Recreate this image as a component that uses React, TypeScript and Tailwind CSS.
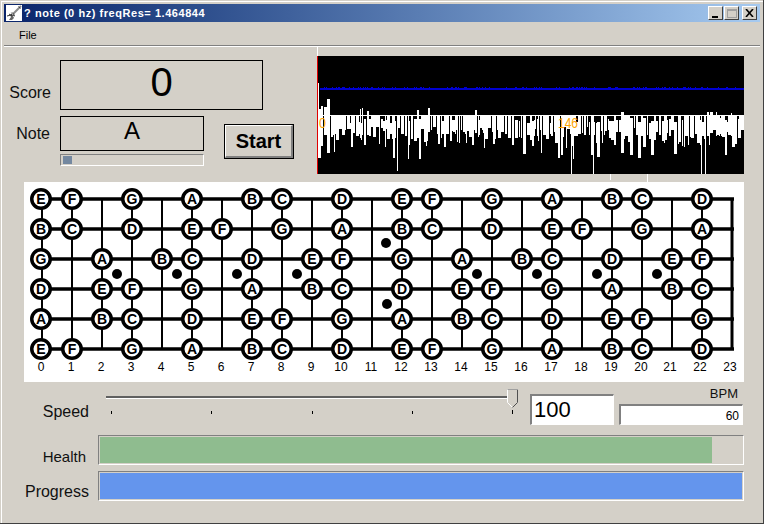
import React from "react";

const sans = { fontFamily: '"Liberation Sans", Arial, sans-serif' };

const ROWS: [number, string[]][] = [
  [199, "E0 F1 G3 A5 B7 C8 D10 E12 F13 G15 A17 B19 C20 D22".split(" ")],
  [229, "B0 C1 D3 E5 F6 G8 A10 B12 C13 D15 E17 F18 G20 A22".split(" ")],
  [259, "G0 A2 B4 C5 D7 E9 F10 G12 A14 B16 C17 D19 E21 F22".split(" ")],
  [289, "D0 E2 F3 G5 A7 B9 C10 D12 E14 F15 G17 A19 B21 C22".split(" ")],
  [319, "A0 B2 C3 D5 E7 F8 G10 A12 B14 C15 D17 E19 F20 G22".split(" ")],
  [349, "E0 F1 G3 A5 B7 C8 D10 E12 F13 G15 A17 B19 C20 D22".split(" ")],
];
const DOTS: [number, number][] = [
  [117, 274], [177, 274], [237, 274], [297, 274], [386, 243], [387, 304],
  [477, 274], [537, 274], [597, 274], [657, 274],
];

function Fretboard() {
  const ox = 24;
  const oy = 182;
  const frets = Array.from({ length: 24 }, (_, i) => i);
  return (
    <svg width="720" height="200" viewBox={`${ox} ${oy} 720 200`} className="block bg-white" style={sans}>
      {ROWS.map(([y]) => (
        <line key={y} x1={42} x2={734} y1={y} y2={y} stroke="#000" strokeWidth={3.5} />
      ))}
      {frets.map((i) => (
        <line key={i} x1={42 + i * 30} x2={42 + i * 30} y1={199} y2={349} stroke="#000" strokeWidth={i === 23 ? 3 : 2} />
      ))}
      {DOTS.map(([x, y]) => (
        <circle key={`${x}-${y}`} cx={x} cy={y} r={5} fill="#000" />
      ))}
      {ROWS.map(([y, notes]) =>
        notes.map((n) => {
          const fret = parseInt(n.slice(1), 10);
          const x = 42 + fret * 30 - (fret === 0 ? 1 : 0);
          return (
            <g key={`${y}-${n}`}>
              <circle cx={x} cy={y} r={9.25} fill="#fff" stroke="#000" strokeWidth={3.5} />
              <text x={x} y={y + 5} textAnchor="middle" fontSize={14} fontWeight={700} fill="#000">
                {n[0]}
              </text>
            </g>
          );
        })
      )}
      {frets.map((i) => (
        <text key={i} x={41 + i * 30 - (i > 20 ? 1 : 0)} y={371} textAnchor="middle" fontSize={12} fill="#000">
          {i}
        </text>
      ))}
    </svg>
  );
}

function Spectrum() {
  let seed = 4242;
  const rnd = () => {
    seed = (seed * 1103515245 + 12345) & 0x7fffffff;
    return (seed >> 8) / 0x7fffff;
  };
  const bars: React.ReactNode[] = [];
  const blue: React.ReactNode[] = [];
  let x = 1;
  while (x < 427) {
    const r = rnd();
    const w = r < 0.4 ? 1 : r < 0.75 ? 2 : 3;
    const q = rnd();
    // y values relative to the svg: the white rule sits at 68 (page y 115)
    let bottom = 80 + rnd() * 12;
    if (q > 0.55) bottom = 88 + rnd() * 12;
    if (q > 0.86) bottom = 98 + rnd() * 14;
    if (q > 0.97) bottom = 110 + rnd() * 10;
    let top = rnd() < 0.3 ? 71 + rnd() * 5 : 69;
    if (x < 14) top = 49 + rnd() * 18;
    else if (rnd() < 0.03) top = 61 + rnd() * 6;
    bars.push(<rect key={x} x={x} y={Math.round(top)} width={w} height={Math.round(bottom - top)} fill="#fff" />);
    x += w;
    if (rnd() < 0.3) x += 1;
  }
  for (let bx = 3; bx < 427; bx++) {
    if (rnd() < 0.2) blue.push(<rect key={bx} x={bx} y={40} width={1} height={1} fill="#0000d0" />);
  }
  const spikes = [80, 254, 276, 384, 388];
  return (
    <svg width="427" height="135" viewBox="0 0 427 135" className="block" style={sans}>
      <line x1="0.5" x2="0.5" y1="0" y2="9" stroke="#fff" />
      <rect x="1" y="9" width="426" height="118" fill="#000" />
      <rect x="3" y="41" width="424" height="2" fill="#0000d0" />
      {blue}
      {bars}
      <rect x="1" y="68" width="427" height="1" fill="#fff" />
      {spikes.map((sx) => (
        <rect key={sx} x={sx} y={69} width={1} height={sx === 80 ? 55 : 58} fill="#fff" />
      ))}
      <rect x="1" y="36" width="1" height="38" fill="#fff" />
      <rect x="0" y="9" width="1" height="118" fill="#e00000" />
      <text x="2" y="81" fontSize={14} fill="#ffa500" textLength={7} lengthAdjust="spacingAndGlyphs">0</text>
      <text x="241" y="81" fontSize={14} fill="#ffa500" textLength={20} lengthAdjust="spacingAndGlyphs">146</text>
      <rect x="293" y="127" width="1" height="6" fill="#fff" />
      <rect x="330" y="127" width="1" height="8" fill="#fff" />
    </svg>
  );
}

function WinButton({ children }: { children: React.ReactNode }) {
  return (
    <div className="flex h-[14px] w-[15px] items-center justify-center border-t border-l border-t-white border-l-white border-r border-b border-r-[#404040] border-b-[#404040] bg-[#d4d0c8]">
      {children}
    </div>
  );
}

function Sunken({ className, children }: { className: string; children?: React.ReactNode }) {
  return (
    <div className={`border-t border-l border-t-[#808080] border-l-[#808080] border-r border-b border-r-white border-b-white ${className}`}>
      {children}
    </div>
  );
}

function Ticks() {
  return (
    <svg width="412" height="6" viewBox="0 0 412 6" className="block">
      {[0, 100, 201, 301, 401].map((x) => (
        <rect key={x} x={x} y={x === 401 ? 0 : 1} width={1} height={x === 401 ? 4 : 3} fill="#000" />
      ))}
    </svg>
  );
}

export default function App() {
  return (
    <div className="relative h-[524px] w-[764px] overflow-hidden bg-[#d4d0c8] text-black" style={sans}>
      <div className="flex h-[524px] w-[764px] flex-col border-r border-b border-r-[#404040] border-b-[#404040]">
        <div className="flex h-[523px] w-[763px] flex-col pt-[1px] pl-[1px]">
          <div className="flex h-[522px] flex-col border-t border-l border-t-white border-l-white pt-[2px] pl-[2px] pr-[2px]">
            {/* Title bar */}
            <div className="flex h-[18px] w-[756px] items-center bg-gradient-to-r from-[#0a246a] to-[#a6caf0]">
              <svg width="16" height="16" viewBox="0 0 16 16" className="ml-[2px] shrink-0">
                <rect width="16" height="16" fill="#fff" />
                <path d="M15 1 L8 8" stroke="#8a8a8a" strokeWidth="2" />
                <path d="M12.5 1.5 L14.5 3.5" stroke="#444" strokeWidth="1" />
                <path d="M4 10 L7 7 L9 9 L7 11 L8 13 L6 15 L3 15 L5 12 Z" fill="#666" />
                <path d="M3 9 L6 11 M1 11 L5 10 M5 9 L9 11" stroke="#333" strokeWidth="1" />
                <path d="M5 7 L7 10" stroke="#bbb" strokeWidth="1" />
              </svg>
              <span className="ml-[2px] whitespace-nowrap text-[11px] font-bold tracking-[0.55px] text-white">
                ? note (0 hz) freqRes= 1.464844
              </span>
              <div className="ml-auto mr-[3px] flex items-center">
                <WinButton>
                  <div className="mt-[7px] mr-[1px] h-[2px] w-[6px] bg-black" />
                </WinButton>
                <div className="w-[1px]" />
                <WinButton>
                  <div className="h-[9px] w-[10px] border border-t-2 border-[#a0a0a0]" />
                </WinButton>
                <div className="w-[3px]" />
                <WinButton>
                  <svg width="9" height="8" viewBox="0 0 9 8">
                    <path d="M1 0 L8 8 M8 0 L1 8" stroke="#000" strokeWidth="1.6" />
                  </svg>
                </WinButton>
              </div>
            </div>
            {/* Menu */}
            <div className="flex h-[23px] w-[756px] items-center pl-[15px] pt-[3px] text-[11px]">File</div>
            <div className="h-[2px] w-[756px] border-t border-b border-t-[#808080] border-b-white" />
            {/* Top */}
            <div className="flex h-[135px]">
              <div className="w-[313px] shrink-0">
                <div className="mt-[13px] flex">
                  <div className="flex w-[47px] items-end justify-end pb-[8px] text-[16px] leading-[18px] text-[#111]">Score</div>
                  <div className="ml-[9px] flex h-[50px] w-[203px] items-start justify-center border border-black pt-[2px] text-[40px] leading-[38px]">
                    0
                  </div>
                </div>
                <div className="mt-[6px] flex items-start">
                  <div className="flex h-[35px] w-[46px] items-center justify-end pl-[1px] text-[16px] leading-[18px] text-[#111]">Note</div>
                  <div className="ml-[10px] flex flex-col">
                    <div className="flex h-[35px] w-[144px] items-start justify-center border border-black text-[24px] leading-[28px]">
                      A
                    </div>
                    <Sunken className="mt-[3px] h-[12px] w-[144px] p-[1px]">
                      <div className="ml-[1px] h-[8px] w-[9px] bg-[#7488a0]" />
                    </Sunken>
                  </div>
                  <div className="ml-[20px] mt-[8px] h-[35px] w-[70px] border border-black">
                    <div className="flex h-full w-full items-center justify-center border-t border-l border-t-white border-l-white border-r-2 border-b-2 border-r-[#808080] border-b-[#808080] text-[20px] font-bold">
                      Start
                    </div>
                  </div>
                </div>
              </div>
              <Spectrum />
            </div>
            {/* Fretboard */}
            <div className="ml-[20px]">
              <Fretboard />
            </div>
            {/* Speed */}
            <div className="mt-[7px] flex h-[39px]">
              <div className="mt-[14px] w-[85px] text-right text-[16px] leading-[18px] text-[#111]">Speed</div>
              <div className="relative ml-[17px] w-[412px]">
                <div className="mt-[7px] h-[3px] w-[401px] border-t-2 border-b border-t-[#606060] border-b-white" />
                <div className="mt-[11px] ml-[5px]">
                  <Ticks />
                </div>
                <svg width="12" height="20" viewBox="0 0 12 20" className="absolute left-[401px] top-0">
                  <path d="M0.5 0.5 H10.5 V13.5 L5.5 18.5 L0.5 13.5 Z" fill="#d4d0c8" stroke="#fff" />
                  <path d="M10.5 0.5 V13.5 L5.5 18.5" fill="none" stroke="#505050" />
                  <path d="M0.5 0.5 H10.5" stroke="#a0a0a0" />
                </svg>
              </div>
              <Sunken className="ml-[12px] mt-[5px] flex h-[31px] w-[84px] items-center border-t-2 border-l-2 bg-white pl-[2px] text-[22px] leading-[24px]">
                100
              </Sunken>
              <div className="ml-[5px] flex w-[124px] flex-col">
                <div className="-mt-[3px] h-[18px] pr-[5px] text-right text-[13px] leading-[15px] text-[#111]">BPM</div>
                <Sunken className="h-[21px] w-[124px] border-t-2 border-l-2 bg-white pr-[3px] pt-[2px] text-right text-[12px] leading-[16px]">
                  60
                </Sunken>
              </div>
            </div>
            {/* Health */}
            <div className="mt-[7px] flex h-[30px]">
              <div className="flex w-[82px] items-end justify-end text-[15px] leading-[16px] text-[#111]">Health</div>
              <Sunken className="ml-[12px] h-[30px] w-[646px] p-[1px]">
                <div className="h-[26px] w-[612px] bg-[#8fbc8f]" />
              </Sunken>
            </div>
            {/* Progress */}
            <div className="mt-[6px] flex h-[30px]">
              <div className="flex w-[85px] items-end justify-end text-[16px] leading-[18px] text-[#111]">Progress</div>
              <Sunken className="ml-[9px] h-[30px] w-[646px] p-[1px]">
                <div className="h-[26px] w-[642px] bg-[#6495ed]" />
              </Sunken>
            </div>
          </div>
        </div>
      </div>
    </div>
  );
}
